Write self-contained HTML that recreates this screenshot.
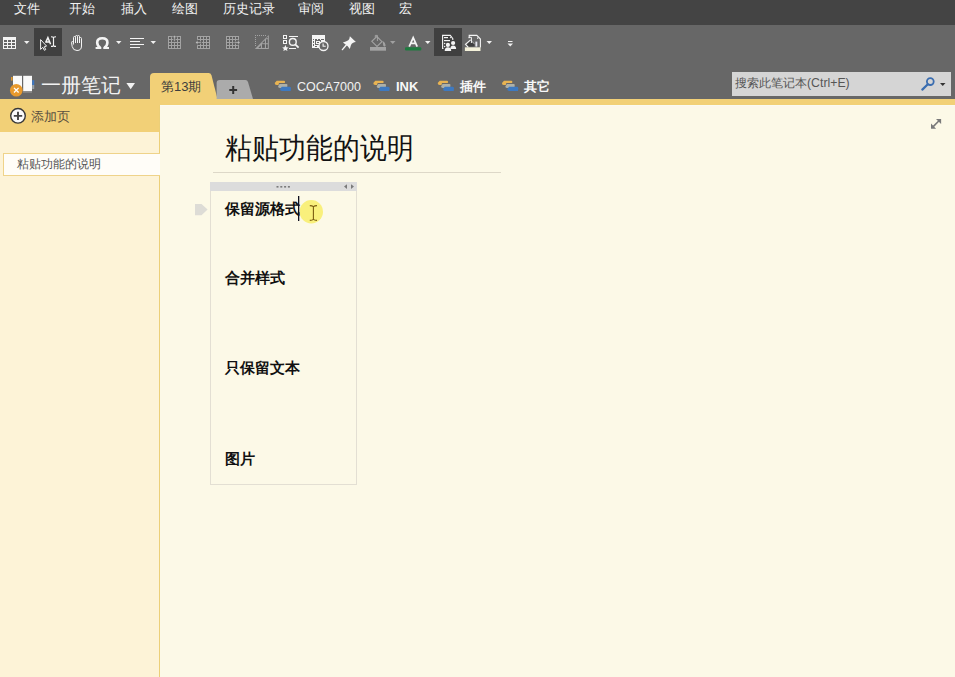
<!DOCTYPE html>
<html><head><meta charset="utf-8">
<style>
*{margin:0;padding:0;box-sizing:border-box}
html,body{width:955px;height:677px;overflow:hidden;background:#fcf9e7;font-family:"Liberation Sans",sans-serif}
.a{position:absolute}
#menubar{left:0;top:0;width:955px;height:25px;background:#444444}
.mi{position:absolute;top:2px;font-size:12.7px;color:#f2f2f2;line-height:14px;white-space:nowrap}
#toolbar{left:0;top:25px;width:955px;height:74px;background:#676767}
#ystrip{left:0;top:99px;width:955px;height:6px;background:#f2d077}
#leftpanel{left:0;top:105px;width:160px;height:572px;background:#fdf3d7;border-right:1px solid #eccf78}
#addhdr{left:0;top:99px;width:159px;height:33px;background:#f2d077}
.cj{white-space:nowrap;line-height:1}
</style></head><body>
<div id="menubar" class="a">
  <span class="mi" style="left:14px">文件</span>
  <span class="mi" style="left:69px">开始</span>
  <span class="mi" style="left:121px">插入</span>
  <span class="mi" style="left:172px">绘图</span>
  <span class="mi" style="left:223px">历史记录</span>
  <span class="mi" style="left:298px">审阅</span>
  <span class="mi" style="left:349px">视图</span>
  <span class="mi" style="left:399px">宏</span>
</div>
<div id="toolbar" class="a"></div>
<svg class="a" style="left:0;top:0" width="955" height="100" viewBox="0 0 955 100" shape-rendering="crispEdges">
<!-- selected boxes -->
<rect x="34" y="28" width="28" height="28" fill="#404040"/>
<rect x="434" y="28" width="28" height="28" fill="#404040"/>
<!-- 1 table -->
<g fill="#f4f4f4">
<rect x="3" y="37" width="13" height="12"/>
</g>
<g fill="#676767">
<rect x="4" y="40" width="3" height="2"/><rect x="8" y="40" width="3" height="2"/><rect x="12" y="40" width="3" height="2"/>
<rect x="4" y="43" width="3" height="2"/><rect x="8" y="43" width="3" height="2"/><rect x="12" y="43" width="3" height="2"/>
<rect x="4" y="46" width="3" height="2"/><rect x="8" y="46" width="3" height="2"/><rect x="12" y="46" width="3" height="2"/>
</g>
<!-- dropdowns white -->
<g fill="#f0f0f0" shape-rendering="auto">
<path d="M24 41h5.5l-2.75 3z"/>
<path d="M116 41h5.5l-2.75 3z"/>
<path d="M150.5 41h5.5l-2.75 3z"/>
<path d="M425 41h5.5l-2.75 3z"/>
<path d="M486.5 41h5.5l-2.75 3z"/>
<path d="M507.5 43.5h5.5l-2.75 3z"/>
<rect x="508" y="41" width="4.5" height="1"/>
</g>
<path d="M390 41h5.5l-2.75 3z" fill="#a0a0a0" shape-rendering="auto"/>
<!-- 3 cursor + AI -->
<g shape-rendering="auto">
<path d="M45.6 42.6 L47.9 37.6 L50.6 44.3 M46.5 41.9 H49.6" fill="none" stroke="#f4f4f4" stroke-width="1.5"/>
<path d="M40.6 39.6 V49.4 L42.8 47.3 L44.4 50.3 L45.7 49.6 L44.3 46.7 L46.6 46.1 Z" fill="#404040" stroke="#f4f4f4" stroke-width="1"/>
<path d="M51 36.7 Q52.7 36.7 53.5 37.4 Q54.3 36.7 56 36.7 M51 46.4 Q52.7 46.4 53.5 45.7 Q54.3 46.4 56 46.4 M53.5 37.3 V45.8" fill="none" stroke="#f4f4f4" stroke-width="1.15"/>
</g>
<!-- 4 hand -->
<g shape-rendering="auto" fill="none" stroke="#f4f4f4" stroke-width="1">
<path d="M73.5 43.5 V37.5 a1 1 0 0 1 2 0 V36.5 a1 1 0 0 1 2 0 V36.5 a1 1 0 0 1 2 0 V38.5 a1 1 0 0 1 2 0 V46 Q81.5 50.5 77 50.5 Q73 50.5 72.2 46.5 L71.5 42.5 a0.9 0.9 0 0 1 1.8 -0.1 L73.5 44.5"/>
<path d="M75.5 37.5 V43 M77.5 36.5 V43 M79.5 38.5 V43"/>
</g>
<!-- 5 omega -->
<g shape-rendering="auto">
<path d="M100.2 47.6 Q97.2 45.6 97.2 42.4 Q97.2 38.2 102.3 38.2 Q107.4 38.2 107.4 42.4 Q107.4 45.6 104.4 47.6" fill="none" stroke="#f4f4f4" stroke-width="2.6"/>
<path d="M95.6 47.1 H101.3 V49 H95.6 Z M103.3 47.1 H109 V49 H103.3 Z" fill="#f4f4f4"/>
</g>
<!-- 7 align -->
<g fill="#f4f4f4">
<rect x="130" y="38" width="14" height="1"/>
<rect x="130" y="41" width="10" height="1"/>
<rect x="130" y="44" width="14" height="1"/>
<rect x="130" y="47" width="10" height="1"/>
</g>
<!-- gray table icons -->
<g fill="#a3a3a3">
<rect x="168" y="36" width="13" height="13"/>
<rect x="197" y="36" width="13" height="13"/>
<rect x="226" y="36" width="13" height="13"/>
</g>
<g fill="#5f5f5f">
<rect x="169" y="37" width="2" height="2"/><rect x="169" y="40" width="2" height="2"/><rect x="169" y="43" width="2" height="2"/><rect x="169" y="46" width="2" height="2"/><rect x="172" y="37" width="2" height="2"/><rect x="172" y="40" width="2" height="2"/><rect x="172" y="43" width="2" height="2"/><rect x="172" y="46" width="2" height="2"/><rect x="175" y="37" width="2" height="2"/><rect x="175" y="40" width="2" height="2"/><rect x="175" y="43" width="2" height="2"/><rect x="175" y="46" width="2" height="2"/><rect x="178" y="37" width="2" height="2"/><rect x="178" y="40" width="2" height="2"/><rect x="178" y="43" width="2" height="2"/><rect x="178" y="46" width="2" height="2"/><rect x="198" y="37" width="2" height="2"/><rect x="198" y="40" width="2" height="2"/><rect x="198" y="43" width="2" height="2"/><rect x="198" y="46" width="2" height="2"/><rect x="201" y="37" width="2" height="2"/><rect x="201" y="40" width="2" height="2"/><rect x="201" y="43" width="2" height="2"/><rect x="201" y="46" width="2" height="2"/><rect x="204" y="37" width="2" height="2"/><rect x="204" y="40" width="2" height="2"/><rect x="204" y="43" width="2" height="2"/><rect x="204" y="46" width="2" height="2"/><rect x="207" y="37" width="2" height="2"/><rect x="207" y="40" width="2" height="2"/><rect x="207" y="43" width="2" height="2"/><rect x="207" y="46" width="2" height="2"/><rect x="227" y="37" width="2" height="2"/><rect x="227" y="40" width="2" height="2"/><rect x="227" y="43" width="2" height="2"/><rect x="227" y="46" width="2" height="2"/><rect x="230" y="37" width="2" height="2"/><rect x="230" y="40" width="2" height="2"/><rect x="230" y="43" width="2" height="2"/><rect x="230" y="46" width="2" height="2"/><rect x="233" y="37" width="2" height="2"/><rect x="233" y="40" width="2" height="2"/><rect x="233" y="43" width="2" height="2"/><rect x="233" y="46" width="2" height="2"/><rect x="236" y="37" width="2" height="2"/><rect x="236" y="40" width="2" height="2"/><rect x="236" y="43" width="2" height="2"/><rect x="236" y="46" width="2" height="2"/>
</g>
<g fill="#b8b8b8" stroke="#5a5a5a" stroke-width="0.7" shape-rendering="auto">
<path d="M174.5 35 L177 37.6 H175.3 V41.5 H173.7 V37.6 H172 Z"/>
<path d="M195.2 42.5 L197.8 40 V41.7 H201.5 V43.3 H197.8 V45 Z"/>
<path d="M240.3 42.5 L237.7 40 V41.7 H234 V43.3 H237.7 V45 Z"/>
</g>
<!-- diagonal table -->
<g fill="#a3a3a3">
<rect x="255" y="35" width="1" height="1"/><rect x="257" y="35" width="1" height="1"/><rect x="259" y="35" width="1" height="1"/><rect x="261" y="35" width="1" height="1"/><rect x="263" y="35" width="1" height="1"/><rect x="265" y="35" width="1" height="1"/>
<rect x="255" y="37" width="1" height="1"/><rect x="255" y="39" width="1" height="1"/><rect x="255" y="41" width="1" height="1"/><rect x="255" y="43" width="1" height="1"/><rect x="255" y="45" width="1" height="1"/>
</g>
<path d="M254.8 49 L268.8 35 V49 Z" fill="#a3a3a3" shape-rendering="auto"/>
<g fill="#5f5f5f" shape-rendering="auto">
<path d="M258.3 47.9 L260.9 45.3 V47.9 Z"/>
<path d="M262 47.9 V44.2 H264.9 V47.9 Z"/>
<path d="M266 47.9 V44.2 H267.8 V47.9 Z"/>
<path d="M262 43.2 L264.9 40.3 V43.2 Z"/>
<path d="M266 43.2 V39.2 H267.8 V43.2 Z"/>
<path d="M266 38.2 L267.8 36.4 V38.2 Z"/>
</g>
<!-- 13 search tag -->
<g fill="none" stroke="#f4f4f4" stroke-width="1.1">
<rect x="283.5" y="35.5" width="3" height="3"/>
<rect x="283.5" y="40.5" width="3" height="3"/>
<path d="M289 36.5 H298 M289 48.5 H296"/>
</g>
<g shape-rendering="auto">
<circle cx="292.8" cy="41.9" r="3.4" fill="none" stroke="#f4f4f4" stroke-width="1.4"/>
<path d="M295.2 44.4 L298.6 47.6" stroke="#f4f4f4" stroke-width="1.8"/>
<path d="M285.4 45 L286.4 47.3 L288.6 47.4 L286.9 48.9 L287.5 51.1 L285.4 49.9 L283.3 51.1 L283.9 48.9 L282.2 47.4 L284.4 47.3 Z" fill="#f4f4f4"/>
</g>
<!-- 14 calendar clock -->
<g>
<rect x="312" y="35" width="13" height="13" fill="#f4f4f4"/>
<g fill="#676767">
<rect x="313" y="39" width="1" height="1"/><rect x="315" y="39" width="2" height="1"/><rect x="318" y="39" width="2" height="1"/><rect x="321" y="39" width="2" height="1"/><rect x="323" y="39" width="1" height="1"/>
<rect x="313" y="41" width="1" height="2"/><rect x="313" y="44" width="1" height="2"/><rect x="315" y="46" width="2" height="1"/>
<rect x="315" y="40" width="6" height="5"/>
</g>
<rect x="316" y="41" width="4" height="3" fill="#f4f4f4"/>
<rect x="317" y="42" width="2" height="1" fill="#676767"/>
</g>
<g shape-rendering="auto">
<circle cx="323.5" cy="46" r="4.5" fill="#676767" stroke="#f4f4f4" stroke-width="1.3"/>
<path d="M323.1 43.4 V46.3 H325.7" fill="none" stroke="#f4f4f4" stroke-width="1.1"/>
</g>
<!-- 15 pin -->
<g shape-rendering="auto" fill="#f4f4f4">
<path d="M349.9 36.3 L355.9 42.1 Q352.2 42.3 350.9 45.2 L349.8 48.9 Q347.8 45.8 345.6 44.6 L342.9 42.4 Q346.2 41.9 348.3 40.3 Q349.7 38.8 349.9 36.3 Z"/>
<path d="M346.3 45 L342.4 49.6" stroke="#f4f4f4" stroke-width="1.4" stroke-linecap="round"/>
</g>
<!-- 16 paint bucket gray -->
<g shape-rendering="auto">
<path d="M376.8 36.5 L382 41.7 L377 46.5 L371.8 41.3 Z" fill="none" stroke="#a3a3a3" stroke-width="1.1"/>
<path d="M375.3 37.6 V35.4 H377.4 V41" fill="none" stroke="#a3a3a3" stroke-width="1"/>
<path d="M382.5 40.8 Q385.5 42.5 385.6 45.2 Q385.5 46.8 384.2 46.6 Q383.1 46.4 383.2 45 Z" fill="#a3a3a3"/>
<rect x="370" y="47" width="16" height="3.7" fill="#a3a3a3"/>
</g>
<!-- 17 font color A -->
<g shape-rendering="auto">
<path d="M409.2 46.6 L413.2 37.6 L417.2 46.6 M410.9 43.3 H415.5" fill="none" stroke="#f4f4f4" stroke-width="1.75"/>
<rect x="405" y="47.3" width="16.3" height="3.1" rx="1" fill="#1e7b3f"/>
</g>
<!-- 18 people doc -->
<g shape-rendering="auto">
<path d="M443.5 48.5 H442.6 V35.4 H450.3 L452.8 38.6 V40" fill="none" stroke="#f4f4f4" stroke-width="1.1"/>
<circle cx="450.5" cy="37.6" r="0.6" fill="#f4f4f4"/>
<rect x="444" y="37" width="4" height="1.2" fill="#f4f4f4"/>
<rect x="444" y="40" width="6" height="1.2" fill="#f4f4f4"/>
<circle cx="444.6" cy="43.4" r="0.75" fill="#f4f4f4"/>
<circle cx="444.6" cy="46.4" r="0.75" fill="#f4f4f4"/>
<circle cx="447.9" cy="44.9" r="2.1" fill="#f4f4f4"/>
<path d="M444.7 51 Q444.7 47.3 447.9 47.3 Q451.2 47.3 451.2 51 Z" fill="#f4f4f4"/>
<circle cx="453.1" cy="43" r="2.1" fill="#f4f4f4"/>
<path d="M450.3 49 Q450.3 45.4 453.1 45.4 Q456.1 45.4 456.1 49 Z" fill="#f4f4f4"/>
</g>
<!-- 19 clear formatting -->
<g shape-rendering="auto">
<path d="M469.2 38 V35.4 H476.8 L480.4 39 V47.5" fill="none" stroke="#f4f4f4" stroke-width="1.1"/>
<path d="M477 37 L478.6 38.7 H477 Z" fill="#f4f4f4"/>
<path d="M466.8 44.5 L471 40.3 L475.2 44.5 L473.6 46.6 H468.6 Z" fill="#404040"/>
<path d="M470.6 39.8 L465.5 44.4 L468.3 47.3" fill="none" stroke="#f4f4f4" stroke-width="1.1"/>
<path d="M471 40.6 L474.6 44" fill="none" stroke="#dcdcdc" stroke-width="0.8"/>
<path d="M469 38.2 V37.3 H471.4 V43" fill="none" stroke="#f4f4f4" stroke-width="1"/>
<rect x="475.4" y="41.6" width="1.9" height="5" fill="#e6e6ee"/>
<rect x="464.9" y="47.3" width="15.6" height="3.7" fill="#f4f1da"/>
</g>
</svg>
<div id="ystrip" class="a"></div>
<div id="leftpanel" class="a"></div>
<div id="addhdr" class="a"></div>
<!-- notebook row -->
<svg class="a" style="left:0;top:60px" width="955" height="40" viewBox="0 60 955 40">
<!-- book -->
<rect x="11" y="77" width="1.6" height="3.6" fill="#e39a2c"/>
<rect x="32.2" y="80.2" width="2" height="4.8" fill="#3d78c4"/>
<rect x="32.2" y="85" width="2" height="4" fill="#9aa2a8"/>
<rect x="13" y="75.8" width="9" height="15.5" fill="#fafafa"/>
<rect x="23.2" y="75.8" width="8.8" height="15.5" fill="#fafafa"/>
<rect x="23" y="91.3" width="9" height="1.5" fill="#8a8a8a"/>
<circle cx="16.3" cy="90.2" r="6.3" fill="#e8992c"/>
<path d="M14 87.9 L18.6 92.5 M18.6 87.9 L14 92.5" stroke="#fff" stroke-width="1.3"/>
<!-- dropdown -->
<path d="M126.4 83 H135 L130.7 89.3 Z" fill="#f2f2f2"/>
<!-- tab 13 -->
<path d="M150 99 V77 Q150 73 154 73 H208.5 Q210.8 73 211.5 75.2 L217.5 99 Z" fill="#f2d077"/>
<!-- plus tab -->
<path d="M216.6 99 V83 Q216.6 80 219.6 80 H245.5 Q247.4 80 248 82 L253 99 Z" fill="#ababab"/>
<path d="M229.3 90 H237.1 M233.2 86 V94" stroke="#333" stroke-width="2"/>
<g transform="translate(0.0 0)">
<path d="M276.7 80.7 H284 Q285.2 80.7 285 82 L284.8 83 H279 L278.5 85.1 H276.7 Q274.6 85.1 274.7 83 Z" fill="#e8b352"/>
<path d="M279.6 84 H286.5 Q287.6 84 287.4 85.2 L287.2 88 H279.8 Q278 88 278.1 86.2 Z" fill="#aeb0a8"/>
<path d="M281.8 86.8 H289.6 Q291.2 86.8 291 88.6 L290.7 91 H282 Q279.9 91 280 89 Z" fill="#3e79c0"/>
</g>
<g transform="translate(98.6 0)">
<path d="M276.7 80.7 H284 Q285.2 80.7 285 82 L284.8 83 H279 L278.5 85.1 H276.7 Q274.6 85.1 274.7 83 Z" fill="#e8b352"/>
<path d="M279.6 84 H286.5 Q287.6 84 287.4 85.2 L287.2 88 H279.8 Q278 88 278.1 86.2 Z" fill="#aeb0a8"/>
<path d="M281.8 86.8 H289.6 Q291.2 86.8 291 88.6 L290.7 91 H282 Q279.9 91 280 89 Z" fill="#3e79c0"/>
</g>
<g transform="translate(163.0 0)">
<path d="M276.7 80.7 H284 Q285.2 80.7 285 82 L284.8 83 H279 L278.5 85.1 H276.7 Q274.6 85.1 274.7 83 Z" fill="#e8b352"/>
<path d="M279.6 84 H286.5 Q287.6 84 287.4 85.2 L287.2 88 H279.8 Q278 88 278.1 86.2 Z" fill="#aeb0a8"/>
<path d="M281.8 86.8 H289.6 Q291.2 86.8 291 88.6 L290.7 91 H282 Q279.9 91 280 89 Z" fill="#3e79c0"/>
</g>
<g transform="translate(227.3 0)">
<path d="M276.7 80.7 H284 Q285.2 80.7 285 82 L284.8 83 H279 L278.5 85.1 H276.7 Q274.6 85.1 274.7 83 Z" fill="#e8b352"/>
<path d="M279.6 84 H286.5 Q287.6 84 287.4 85.2 L287.2 88 H279.8 Q278 88 278.1 86.2 Z" fill="#aeb0a8"/>
<path d="M281.8 86.8 H289.6 Q291.2 86.8 291 88.6 L290.7 91 H282 Q279.9 91 280 89 Z" fill="#3e79c0"/>
</g>

</svg>
<div class="a cj" style="left:41px;top:75.5px;font-size:19.5px;font-weight:300;color:#f2f2f2">一册笔记</div>
<div class="a cj" style="left:161px;top:80px;font-size:13px;color:#3d3d3d">第13期</div>
<div class="a cj" style="left:297px;top:81px;font-size:12.5px;color:#f2f2f2">COCA7000</div>
<div class="a cj" style="left:396px;top:80px;font-size:13px;font-weight:bold;color:#f8f8f8">INK</div>
<div class="a cj" style="left:460px;top:81px;font-size:12.5px;font-weight:bold;color:#f8f8f8">插件</div>
<div class="a cj" style="left:524px;top:81px;font-size:12.5px;font-weight:bold;color:#f8f8f8">其它</div>
<!-- search -->
<div class="a" style="left:732px;top:72px;width:219px;height:24px;background:#d5d5d5"></div>
<div class="a cj" style="left:735px;top:76.5px;font-size:12.3px;color:#555">搜索此笔记本(Ctrl+E)</div>
<svg class="a" style="left:915px;top:72px" width="36" height="24" viewBox="915 72 36 24">
<circle cx="930.3" cy="81.6" r="3.4" fill="none" stroke="#3a6db0" stroke-width="1.8"/>
<path d="M927.8 84.2 L922.3 89.6" stroke="#3a6db0" stroke-width="2.2" stroke-linecap="round"/>
<path d="M940 83 H945.5 L942.75 86 Z" fill="#333"/>
</svg>



<!-- left panel content -->
<svg class="a" style="left:0;top:105px" width="160" height="30" viewBox="0 105 160 30">
<circle cx="18" cy="115.8" r="7.3" fill="#fbfbfb" stroke="#383838" stroke-width="1.4"/>
<path d="M13.8 115.9 H22.2 M18 111.7 V120.1" stroke="#444" stroke-width="1.9"/>
</svg>
<div class="a cj" style="left:31px;top:110.5px;font-size:12.5px;color:#5a5040">添加页</div>
<div class="a" style="left:3px;top:153px;width:157px;height:23px;background:#fffdf8;border:1px solid #efd38a;border-right:none"></div>
<div class="a cj" style="left:17px;top:158px;font-size:12px;color:#555">粘贴功能的说明</div>
<div class="a" style="left:160px;top:105px;width:795px;height:1px;background:#fafbf0"></div>
<div class="a" style="left:160px;top:106px;width:795px;height:2px;background:#fdf7ea"></div>
<!-- page title -->
<div class="a cj" style="left:225px;top:134px;font-size:26.5px;color:#111;transform:scaleY(1.08);transform-origin:0 0">粘贴功能的说明</div>
<div class="a" style="left:213px;top:172px;width:288px;height:1px;background:#ddd8c8"></div>

<!-- outline container -->
<div class="a" style="left:210px;top:182px;width:147px;height:303px;border:1px solid #e3dfd3;border-top:none"></div>
<div class="a" style="left:210px;top:182px;width:147px;height:8.5px;background:#dcdcdc"></div>
<div class="a cj" style="left:225px;top:202px;font-size:14.5px;font-weight:bold;color:#111">保留源格式</div>
<div class="a cj" style="left:225px;top:271px;font-size:14.5px;font-weight:bold;color:#111">合并样式</div>
<div class="a cj" style="left:225px;top:361px;font-size:14.5px;font-weight:bold;color:#111">只保留文本</div>
<div class="a cj" style="left:225px;top:452px;font-size:14.5px;font-weight:bold;color:#111">图片</div>

<!-- outline extras -->
<svg class="a" style="left:180px;top:175px" width="200" height="60" viewBox="180 175 200 60">
<g fill="#7a7a7a">
<rect x="276.5" y="186" width="2" height="1.6"/><rect x="280.3" y="186" width="2" height="1.6"/><rect x="284.1" y="186" width="2" height="1.6"/><rect x="287.9" y="186" width="2" height="1.6"/>
<path d="M347 184.2 V189 L344 186.6 Z"/>
<path d="M351 184.2 V189 L354 186.6 Z"/>
</g>
<path d="M195 203.9 H201.5 L207.6 209.6 L201.5 215.3 H195 Z" fill="#dddcd6"/>
<circle cx="311.3" cy="211.7" r="11.7" fill="#f9f07c"/>
<rect x="298" y="196" width="1.3" height="25" fill="#101020"/>
<path d="M309.8 205.6 Q312.2 205.6 313.4 206.6 Q314.6 205.6 317 205.6 M309.8 220.4 Q312.2 220.4 313.4 219.4 Q314.6 220.4 317 220.4 M313.4 206.4 V219.6" stroke="#7a5c10" stroke-width="1.1" fill="none"/>
</svg>
<!-- expand icon -->
<svg class="a" style="left:925px;top:112px" width="24" height="24" viewBox="925 112 24 24">
<path d="M933.2 126.6 L939 120.8" stroke="#7a7a7a" stroke-width="1.6"/>
<path d="M936 119 H941.1 V124.1 Z" fill="#7a7a7a"/>
<path d="M931 123.6 V128.7 H936.1 Z" fill="#7a7a7a"/>
</svg>
</body></html>
